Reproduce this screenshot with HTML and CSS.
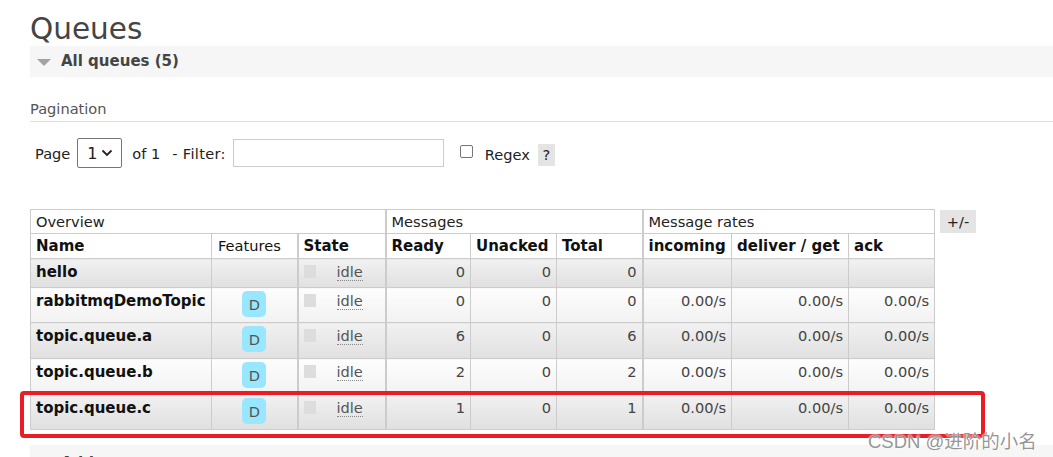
FILE: index.html
```html
<!DOCTYPE html>
<html lang="en">
<head>
    <meta charset="UTF-8">
    <meta name="viewport" content="width=device-width, initial-scale=1.0">
    <title>Queues</title>
    <link rel="stylesheet" href="styles.css">
</head>
<body>
    <div class="main">
        <h1>Queues</h1>
        <div class="section-head"><span class="arrow"></span>All queues (5)</div>

        <h3 class="pagination-title">Pagination</h3>
        <div class="filter">
            <span>Page</span>
            <div class="select">1
                <svg width="12" height="8" viewBox="0 0 12 8"><path d="M1.5 1.5 L6 6 L10.5 1.5" fill="none" stroke="#222" stroke-width="1.8"/></svg>
            </div>
            <span class="of">of 1</span>
            <span class="filter-label">- Filter:</span>
            <div class="text-input"></div>
            <span class="checkbox"></span>
            <span class="regex">Regex</span>
            <span class="help">?</span>
        </div>

        <div class="table-wrap">
            <table class="list">
                <colgroup>
                    <col class="c-name">
                    <col class="c-feat">
                    <col class="c-state">
                    <col class="c-ready">
                    <col class="c-unack">
                    <col class="c-total">
                    <col class="c-in">
                    <col class="c-del">
                    <col class="c-ack">
                </colgroup>
                <thead>
                    <tr class="group">
                        <th colspan="3">Overview</th>
                        <th colspan="3" class="sep">Messages</th>
                        <th colspan="3" class="sep">Message rates</th>
                    </tr>
                    <tr class="cols">
                        <th>Name</th>
                        <th class="normal">Features</th>
                        <th class="sep">State</th>
                        <th class="sep">Ready</th>
                        <th>Unacked</th>
                        <th>Total</th>
                        <th class="sep">incoming</th>
                        <th>deliver / get</th>
                        <th>ack</th>
                    </tr>
                </thead>
                <tbody>
                    <tr class="alt1">
                        <td class="name">hello</td>
                        <td></td>
                        <td class="sep"><span class="dot"></span><abbr>idle</abbr></td>
                        <td class="num sep">0</td>
                        <td class="num">0</td>
                        <td class="num">0</td>
                        <td class="num sep"></td>
                        <td class="num"></td>
                        <td class="num"></td>
                    </tr>
                    <tr class="alt2">
                        <td class="name">rabbitmqDemoTopic</td>
                        <td class="feat"><span class="badge">D</span></td>
                        <td class="sep"><span class="dot"></span><abbr>idle</abbr></td>
                        <td class="num sep">0</td>
                        <td class="num">0</td>
                        <td class="num">0</td>
                        <td class="num sep">0.00/s</td>
                        <td class="num">0.00/s</td>
                        <td class="num">0.00/s</td>
                    </tr>
                    <tr class="alt1 tall">
                        <td class="name">topic.queue.a</td>
                        <td class="feat"><span class="badge">D</span></td>
                        <td class="sep"><span class="dot"></span><abbr>idle</abbr></td>
                        <td class="num sep">6</td>
                        <td class="num">0</td>
                        <td class="num">6</td>
                        <td class="num sep">0.00/s</td>
                        <td class="num">0.00/s</td>
                        <td class="num">0.00/s</td>
                    </tr>
                    <tr class="alt2 tall">
                        <td class="name">topic.queue.b</td>
                        <td class="feat"><span class="badge">D</span></td>
                        <td class="sep"><span class="dot"></span><abbr>idle</abbr></td>
                        <td class="num sep">2</td>
                        <td class="num">0</td>
                        <td class="num">2</td>
                        <td class="num sep">0.00/s</td>
                        <td class="num">0.00/s</td>
                        <td class="num">0.00/s</td>
                    </tr>
                    <tr class="alt1">
                        <td class="name">topic.queue.c</td>
                        <td class="feat"><span class="badge">D</span></td>
                        <td class="sep"><span class="dot"></span><abbr>idle</abbr></td>
                        <td class="num sep">1</td>
                        <td class="num">0</td>
                        <td class="num">1</td>
                        <td class="num sep">0.00/s</td>
                        <td class="num">0.00/s</td>
                        <td class="num">0.00/s</td>
                    </tr>
                </tbody>
            </table>
            <span class="plus-minus">+/-</span>
        </div>

        <div class="section-head add"><span class="arrow right"></span>Add a new queue</div>
    </div>

    <div class="highlight"></div>
    <div class="watermark">CSDN @进阶的小名</div>
</body>
</html>
```

FILE: styles.css
```css
*{
    margin: 0;
    padding: 0;
    box-sizing: border-box;
}

body{
    font-family: "DejaVu Sans", Verdana, sans-serif;
    font-size: 14.6px;
    color: #444;
    background: #fff;
    overflow: hidden;
    height: 457px;
    position: relative;
}

.main{
    padding-left: 30px;
}

h1{
    font-size: 29.5px;
    font-weight: normal;
    line-height: 34px;
    padding-top: 12px;
    color: #444;
}

.section-head{
    height: 31px;
    background: #f6f6f6;
    font-weight: bold;
    font-size: 15px;
    color: #444;
    line-height: 31px;
    padding-left: 31px;
    position: relative;
}
.arrow{
    position: absolute;
    left: 7px;
    top: 13px;
    width: 0;
    height: 0;
    border-left: 7px solid transparent;
    border-right: 7px solid transparent;
    border-top: 7px solid #a3a3a3;
}

.pagination-title{
    margin-top: 22px;
    font-size: 14.6px;
    font-weight: normal;
    color: #555;
    line-height: 20px;
    padding-bottom: 2px;
    border-bottom: 1px solid #ddd;
}

.filter{
    display: flex;
    align-items: center;
    height: 30px;
    margin-top: 16px;
    padding-left: 5px;
    color: #222;
}
.select{
    margin-left: 7px;
    width: 45px;
    height: 30px;
    border: 1px solid #767676;
    border-radius: 2px;
    display: flex;
    align-items: center;
    justify-content: space-between;
    padding: 0 8px 0 9px;
    font-size: 16px;
}
.of{
    margin-left: 10px;
}
.filter-label{
    margin-left: 12px;
    letter-spacing: 0.3px;
}
.text-input{
    margin-left: 7px;
    width: 211px;
    height: 28px;
    border: 1px solid #ccc;
}
.checkbox{
    margin-left: 16px;
    width: 13px;
    height: 13px;
    border: 1px solid #767676;
    border-radius: 2px;
    margin-top: -3px;
}
.regex{
    margin-left: 12px;
    margin-top: 3px;
}
.help{
    margin-left: 8px;
    margin-top: 3px;
    background: #e4e4e4;
    width: 17px;
    height: 22px;
    line-height: 22px;
    text-align: center;
}

.table-wrap{
    display: flex;
    align-items: flex-start;
    margin-top: 41px;
}

table.list{
    border-collapse: collapse;
    table-layout: fixed;
    width: 904px;
}
.c-name{ width: 181px; }
.c-feat{ width: 86px; }
.c-state{ width: 88px; }
.c-ready{ width: 85px; }
.c-unack{ width: 86px; }
.c-total{ width: 86px; }
.c-in{ width: 89px; }
.c-del{ width: 117px; }
.c-ack{ width: 86px; }

table.list th,
table.list td{
    border: 1px solid #ccc;
    vertical-align: top;
    text-align: left;
    line-height: 20px;
    white-space: nowrap;
}
table.list .sep{
    border-left: 2px solid #ccc;
}
.group th{
    font-weight: normal;
    color: #222;
    padding: 2px 5px 1px;
    height: 24px;
}
.cols th{
    font-weight: bold;
    font-size: 15px;
    color: #111;
    padding: 2px 5px 1px;
    height: 25px;
    border-bottom: 2px solid #ccc;
}
.cols th.normal{
    font-weight: normal;
    font-size: 14.6px;
    padding-left: 6px;
}

table.list td{
    padding: 3px 5px 5px;
}
tbody tr{
    height: 29px;
}
tbody tr.tall{
    height: 36px;
}
tr.alt1 td{
    background: linear-gradient(#f1f1f1, #e0e0e0);
}
tr.alt2 td{
    background: linear-gradient(#fdfdfd, #f2f2f2);
}
td.name{
    font-weight: bold;
    font-size: 15px;
    color: #111;
}
td.num{
    text-align: right !important;
    padding-right: 6px;
}
td.feat{
    text-align: center !important;
    padding-left: 0;
    padding-right: 0;
}
.badge{
    display: inline-block;
    vertical-align: top;
    background: #99e6ff;
    border-radius: 5px;
    width: 24px;
    height: 26px;
    line-height: 27px;
    text-align: center;
    color: #555;
}
.dot{
    display: inline-block;
    width: 12px;
    height: 13px;
    background: #ddd;
    vertical-align: top;
    margin-top: 3px;
}
abbr{
    text-decoration: none;
    border-bottom: 1px dotted #888;
    margin-left: 21px;
    color: #555;
}

.plus-minus{
    margin-left: 5px;
    margin-top: 1px;
    background: #e4e4e4;
    width: 36px;
    height: 23px;
    line-height: 23px;
    text-align: center;
    color: #222;
}

.section-head.add{
    margin-top: 15px;
    line-height: 36px;
    height: 40px;
}
.arrow.right{
    border-top: 7px solid transparent;
    border-bottom: 7px solid transparent;
    border-left: 7px solid #a3a3a3;
    border-right: none;
    left: 12px;
    top: 14px;
}

.highlight{
    position: absolute;
    left: 20px;
    top: 391px;
    width: 965px;
    height: 47px;
    border: 4px solid #ea1c24;
    border-radius: 4px;
}

.watermark{
    position: absolute;
    left: 868px;
    top: 427px;
    font-family: "Liberation Sans", "Noto Sans CJK SC", sans-serif;
    font-size: 18.5px;
    color: rgba(130, 130, 130, 0.85);
    text-shadow: 0 0 2px #fff, 0 0 2px #fff;
    white-space: nowrap;
}
```
